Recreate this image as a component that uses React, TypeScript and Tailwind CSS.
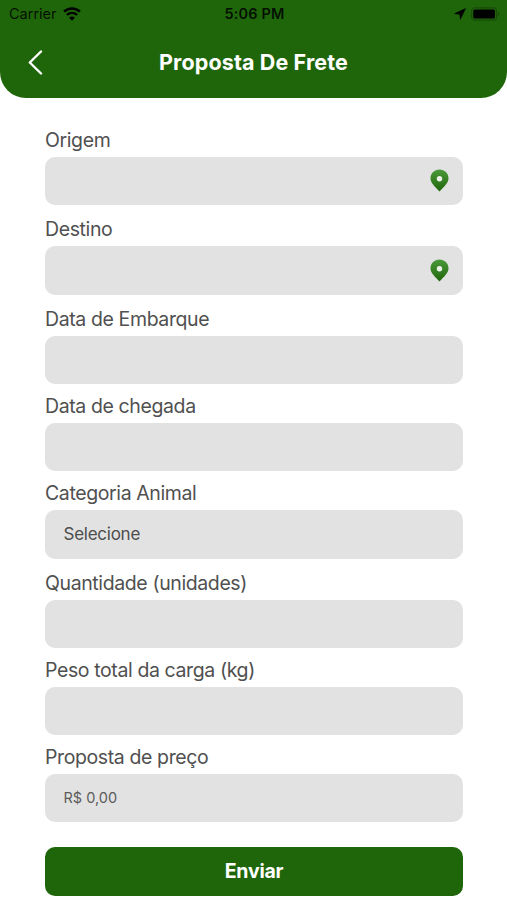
interface Field {
  label: string;
  value?: string;
  valueClass?: string;
  pin?: boolean;
  gap: string;
}

const FIELDS: Field[] = [
  { label: "Origem", pin: true, gap: "mb-[12px]" },
  { label: "Destino", pin: true, gap: "mb-[12px]" },
  { label: "Data de Embarque", gap: "mb-[9.7px]" },
  { label: "Data de chegada", gap: "mb-[9.7px]" },
  {
    label: "Categoria Animal",
    value: "Selecione",
    valueClass: "text-[17px] tracking-[-0.25px] text-[#4d4d4d]",
    gap: "mb-[12px]",
  },
  { label: "Quantidade (unidades)", gap: "mb-[9.7px]" },
  { label: "Peso total da carga (kg)", gap: "mb-[9.7px]" },
  {
    label: "Proposta de preço",
    value: "R$ 0,00",
    valueClass: "text-[14.5px] text-[#5c5c5c]",
    gap: "mb-[25px]",
  },
];

export default function App() {
  return (
    <div className="flex min-h-[900px] w-full flex-col overflow-hidden bg-white font-['Inter',sans-serif]">
      <header className="h-[98px] rounded-b-[26px] bg-[#1f660a]">
        <StatusBar />
        <div className="grid h-[70px] grid-cols-[1fr_auto_1fr] items-center">
          <button className="ml-[28px] w-fit" aria-label="Voltar">
            <BackIcon />
          </button>
          <h1 className="text-[21.5px] leading-[28px] font-bold tracking-[0.12px] text-white">
            Proposta De Frete
          </h1>
        </div>
      </header>

      <form className="flex flex-col pt-[29.7px] pr-[44px] pl-[45px]">
        {FIELDS.map((field) => (
          <FormField key={field.label} {...field} />
        ))}
        <button
          type="button"
          className="h-[48.5px] rounded-[10px] bg-[#1f660a] text-[19.5px] font-bold tracking-[-0.2px] text-white"
        >
          Enviar
        </button>
      </form>
    </div>
  );
}

function StatusBar() {
  return (
    <div className="grid h-[27px] grid-cols-3 items-center pr-[7px] pl-[9px] text-[14.5px] text-black/85">
      <div className="flex items-center gap-[6px]">
        <span>Carrier</span>
        <WifiIcon />
      </div>
      <span className="text-center font-semibold tracking-[0.15px]">5:06 PM</span>
      <div className="flex items-center justify-end gap-[5px]">
        <LocationIcon />
        <BatteryIcon />
      </div>
    </div>
  );
}

function FormField({ label, value, valueClass, pin, gap }: Field) {
  return (
    <div className={gap}>
      <label className="mb-[5px] block text-[19.5px] leading-[24px] tracking-[-0.39px] text-[#505050]">
        {label}
      </label>
      <div className="flex h-[48.5px] items-center rounded-[10px] bg-[#e2e2e2] pr-[14px] pl-[18.5px]">
        <span className={valueClass}>{value}</span>
        {pin && (
          <span className="ml-auto">
            <PinIcon />
          </span>
        )}
      </div>
    </div>
  );
}

function BackIcon() {
  return (
    <svg width="15" height="25" viewBox="0 0 15 25" fill="none" className="block">
      <path d="M13 1.5 L1.8 12.5 L13 23.5" stroke="#fff" strokeWidth="2.4" strokeLinecap="round" strokeLinejoin="round" />
    </svg>
  );
}

function WifiIcon() {
  return (
    <svg width="18" height="14" viewBox="0 0 18 14" fill="none" className="block">
      <path d="M1.1 4.7 A11.2 11.2 0 0 1 16.9 4.7" stroke="#000" strokeWidth="2.6" />
      <path d="M3.9 7.9 A7.2 7.2 0 0 1 14.1 7.9" stroke="#000" strokeWidth="2.3" />
      <path d="M9 13.8 L6.1 10.8 A4 4 0 0 1 11.9 10.8 Z" fill="#000" />
    </svg>
  );
}

function LocationIcon() {
  return (
    <svg width="12" height="12" viewBox="0 0 12 12" className="block">
      <path d="M11.5 0.6 L6.4 11.2 L5.8 6.2 L0.7 5.6 Z" fill="#000" stroke="#000" strokeWidth="0.6" strokeLinejoin="round" />
    </svg>
  );
}

function BatteryIcon() {
  return (
    <svg width="29" height="14" viewBox="0 0 29 14" className="block">
      <rect x="0.6" y="0.9" width="25" height="12.2" rx="3.2" fill="none" stroke="#174d08" strokeWidth="1.1" />
      <rect x="2.2" y="2.5" width="21.8" height="9" rx="1.6" fill="#000" />
      <path d="M26.8 4.8 C29 5.6 29 8.4 26.8 9.2 Z" fill="#174d08" />
    </svg>
  );
}

function PinIcon() {
  return (
    <svg width="19" height="23" viewBox="0 0 19 23" className="block">
      <defs>
        <linearGradient id="pin" x1="0" y1="0" x2="0" y2="1">
          <stop offset="0" stopColor="#4b9a3c" />
          <stop offset="1" stopColor="#1f660a" />
        </linearGradient>
      </defs>
      <path
        d="M9.5 0.5 C4.5 0.5 0.5 4.4 0.5 9.3 C0.5 14.2 5 17.6 9.5 22.5 C14 17.6 18.5 14.2 18.5 9.3 C18.5 4.4 14.5 0.5 9.5 0.5 Z"
        fill="url(#pin)"
      />
      <circle cx="9.5" cy="9.8" r="2.7" fill="#edf3eb" />
    </svg>
  );
}
